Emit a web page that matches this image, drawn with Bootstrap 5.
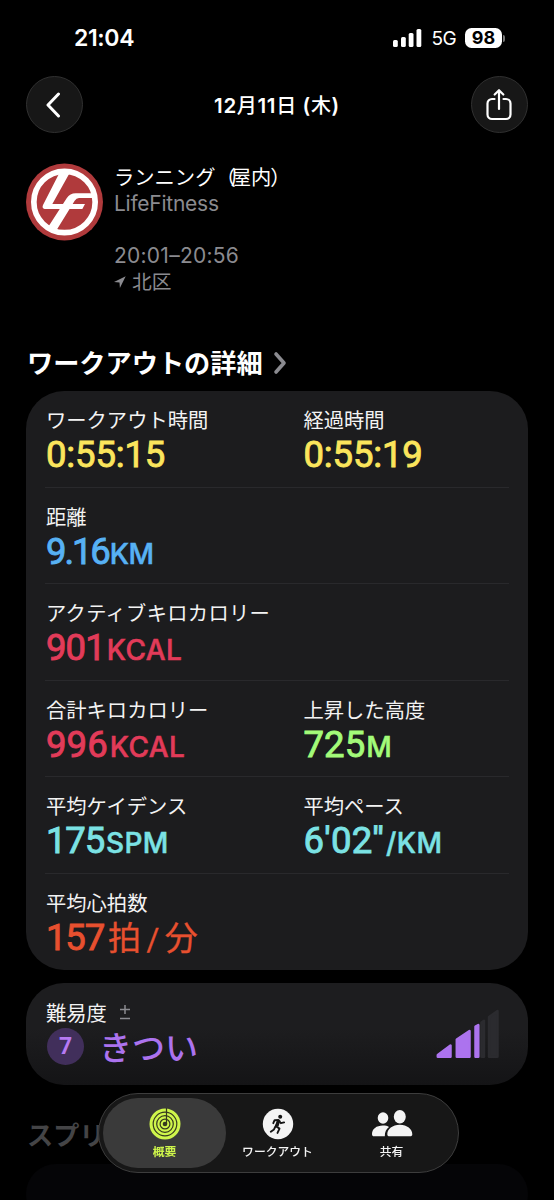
<!DOCTYPE html>
<html lang="ja">
<head>
<meta charset="utf-8">
<meta name="viewport" content="width=device-width, initial-scale=1">
<title>フィットネス</title>
<link href="https://cdn.jsdelivr.net/npm/bootstrap@5.3.0/dist/css/bootstrap.min.css" rel="stylesheet">
<style>
body{background:#000;color:#fff;font-family:Inter,"Noto Sans CJK JP",sans-serif;height:1200px;overflow:hidden;position:relative}
svg{display:block;flex:none}
.status{height:76px;padding:0 49px 0 74px}
.clock{font-size:23px;font-weight:600;line-height:28px;letter-spacing:-.35px}
.net{font-size:19px;line-height:24px;font-weight:400;letter-spacing:-.6px;margin:1px 9px 0 9px}
.batt{width:37px;height:20px;border-radius:6.5px;background:#fff;color:#000;font-size:18px;font-weight:700;line-height:20px;text-align:center}
.batt-tip{width:2px;height:7px;border-radius:0 2px 2px 0;background:#777;margin-left:1px}
.top{height:57px;padding:0 26px}
.round{width:57px;height:57px;border-radius:50%;background:#171717;border:1px solid #303030}
.title{font-size:20.5px;font-weight:600;line-height:28px;letter-spacing:.65px;white-space:pre;padding-top:2px}
.title .k{font-size:20px;font-weight:500}
.intro{padding:30px 26px 0;height:208px}
.l1{font-size:20.3px;line-height:26px;white-space:nowrap}
.l2{font-size:21px;line-height:26px;color:#8b8b90}
.about{margin-left:11px;padding-top:2px}
.fit{letter-spacing:-.25px}
.time{margin-top:26px;letter-spacing:.25px}
.place{font-size:19.8px;margin-left:6px}
.pk{margin-left:-5px;margin-right:-1px}
.head{font-size:26.2px;line-height:32px;font-weight:700;font-family:"Noto Sans CJK JP",sans-serif}
.detail{margin:5px 0 0 27px;height:45px}
.detail svg{margin:4px 0 0 9px}
.panel{background:#1c1c1e;border-radius:38px;margin:0 26px}
.metrics{height:579px;padding:0 19px}
.metric{height:96.5px;border-bottom:1px solid #29292c}
.metric:last-child{border:0}
.metric>.col-x:first-child{width:257.5px}
.lbl{font-family:"Noto Sans CJK JP",sans-serif;font-size:20.3px;line-height:24px;padding:16px 0 0 1px;color:#f3f3f3;font-weight:400;white-space:nowrap}
.wide{letter-spacing:.3px}
.val{font-family:Roboto,"Noto Sans CJK JP",sans-serif;font-size:36.5px;line-height:44px;font-weight:400;white-space:nowrap;-webkit-text-stroke:.9px currentColor;stroke-linejoin:round;padding:2px 0 0 1px;letter-spacing:.1px}
.val small{font-family:Inter,sans-serif;font-size:28px;font-weight:500;letter-spacing:.4px;margin-left:2px;-webkit-text-stroke:.5px currentColor}
.val.clk{letter-spacing:-.15px}
.val.tight{letter-spacing:-1.2px}
.val.burn{letter-spacing:-.9px}
.val.dist{letter-spacing:-2.1px}
.val.dist small,.val.alt small{margin-left:1px;letter-spacing:-.4px}
.val.pace{letter-spacing:.3px}
.val .cj{font-size:33px;font-weight:400;-webkit-text-stroke:.3px currentColor;letter-spacing:0;font-family:"Noto Sans CJK JP",sans-serif;line-height:30px;margin-left:4px}
.cj .sl{margin:0 5.5px;font-family:Roboto,sans-serif;font-size:31px}
.yel{color:#fbe55c}.blu{color:#57b1f4}.red{color:#e23b59}.grn{color:#a3fb79}.cya{color:#7be2e4}.org{color:#e8502f}
.effort{height:102px;margin-top:13px;padding:17px 28px 0 19px;background:linear-gradient(#1d1d1f 45%,#141416)}
.sign{margin-left:12px}
.seven{width:37px;height:37px;border-radius:50%;background:#412f5b;color:#b67af3;font:700 23px/37px Roboto,sans-serif;text-align:center;margin-left:2px}
.hard{font-size:33px;line-height:37px;font-weight:500;color:#ac73ee;font-family:"Noto Sans CJK JP",sans-serif;margin-left:15px}
.rate{margin-top:4px}
.bars{margin-top:9px}
.next{color:#444446;margin:33px 0 0 27px}
.low{height:60px;margin-top:14px;background:#050507}
.tabs{position:absolute;left:98px;top:1093px;width:361px;height:80px;border-radius:40px;background:rgba(24,24,24,.94);backdrop-filter:blur(3px);border:1px solid #3d3d3d;padding:4px;overflow:hidden}
.tab{height:70px;font:500 11.8px/16px "Noto Sans CJK JP",sans-serif;padding-top:10px;color:#f4f4f4;border-radius:35px;white-space:nowrap}
.tab .cap{margin-top:3px}
.tab.on{width:123px;background:rgba(62,62,62,.92);color:#cef54b;font-weight:700}.tab.mid{width:103px}.tab.end{width:125px}
</style>
</head>
<body>
<header>
  <div class="status d-flex align-items-center justify-content-between">
    <div class="clock">21:04</div>
    <div class="d-flex align-items-center">
      <svg width="29" height="18" viewBox="0 0 29 18" fill="#fff"><rect x="0" y="11" width="4.800" height="7" rx="1.500"/><rect x="8" y="8" width="4.800" height="10" rx="1.500"/><rect x="15.700" y="4" width="4.800" height="14" rx="1.500"/><rect x="23.500" y="0" width="4.800" height="18" rx="1.500"/></svg>
      <span class="net">5G</span>
      <span class="batt">98</span><span class="batt-tip"></span>
    </div>
  </div>
  <div class="top d-flex align-items-center justify-content-between">
    <div class="round d-flex align-items-center justify-content-center"><svg width="18" height="26" viewBox="0 0 18 26" fill="none" stroke="#fff" stroke-width="3" stroke-linecap="round" stroke-linejoin="round"><path d="M12.500 2 2 13l10.500 11"/></svg></div>
    <div class="title">12<span class="k">月</span>11<span class="k">日</span> (<span class="k">木</span>)</div>
    <div class="round d-flex align-items-center justify-content-center"><svg width="28" height="34" viewBox="0 0 28 34" fill="none" stroke="#fff" stroke-width="2.200" stroke-linecap="round" stroke-linejoin="round"><path d="M9.500 11H7a4.500 4.500 0 0 0-4.500 4.500v11A4.500 4.500 0 0 0 7 31h14a4.500 4.500 0 0 0 4.500-4.500v-11A4.500 4.500 0 0 0 21 11h-2.500M14 21V2.500M9.700 6.500 14 2.200l4.300 4.300"/></svg></div>
  </div>
</header>
<main>
  <section class="intro d-flex">
    <svg width="77" height="78" viewBox="33 25 231 232">
      <circle cx="148.500" cy="141" r="115.500" fill="#b03a3c"/>
      <circle cx="148.500" cy="141" r="92" fill="none" stroke="#fff" stroke-width="17"/>
      <path fill="#fff" d="M135 50h31l-54 97h98l-8 15H89q-9-2-5-12z"/>
      <path fill="#fff" d="M98 218l57-88q10-15 27-15h60v14h-50q-8 0-13 8l-56 91z"/>
    </svg>
    <div class="about">
      <div class="l1">ランニング<span>（</span><span class="pk">屋内</span><span>）</span></div>
      <div class="l2 fit">LifeFitness</div>
      <div class="l2 time">20:01–20:56</div>
      <div class="l2 d-flex align-items-center"><svg width="12" height="12" viewBox="0 0 12 12" fill="#8b8b90"><path d="M11.700.3 0 6.100l5.500.5.400 5.400z"/></svg><span class="place">北区</span></div>
    </div>
  </section>
  <h2 class="head detail d-flex mb-0"><span>ワークアウトの詳細</span><svg width="16" height="26" viewBox="0 0 16 26" fill="none" stroke="#8b8b90" stroke-width="3.600" stroke-linecap="round" stroke-linejoin="round"><path d="m4 4 8 9-8 9"/></svg></h2>
  <section class="panel metrics">
    <div class="metric d-flex"><div class="col-x"><div class="lbl">ワークアウト時間</div><div class="val clk yel">0:55:15</div></div><div class="col-x"><div class="lbl">経過時間</div><div class="val clk yel">0:55:19</div></div></div>
    <div class="metric d-flex"><div class="col-x"><div class="lbl">距離</div><div class="val dist blu">9.16<small>KM</small></div></div></div>
    <div class="metric d-flex"><div class="col-x"><div class="lbl wide">アクティブキロカロリー</div><div class="val burn red">901<small>KCAL</small></div></div></div>
    <div class="metric d-flex"><div class="col-x"><div class="lbl">合計キロカロリー</div><div class="val red">996<small>KCAL</small></div></div><div class="col-x"><div class="lbl">上昇した高度</div><div class="val alt grn">725<small>M</small></div></div></div>
    <div class="metric d-flex"><div class="col-x"><div class="lbl">平均ケイデンス</div><div class="val tight cya">175<small>SPM</small></div></div><div class="col-x"><div class="lbl">平均ペース</div><div class="val pace cya">6'02''<small>/KM</small></div></div></div>
    <div class="metric d-flex"><div class="col-x"><div class="lbl">平均心拍数</div><div class="val tight org">157<span class="cj">拍<span class="sl">/</span>分</span></div></div></div>
  </section>
  <section class="panel effort d-flex justify-content-between">
    <div>
      <div class="lbl pt-0 d-flex align-items-center"><span>難易度</span><svg class="sign" width="12" height="18" viewBox="0 0 12 18" stroke="#8b8b90" stroke-width="1.500"><path d="M6 2v9M1 6.500h10M1 15.500h10"/></svg></div>
      <div class="rate d-flex align-items-center"><span class="seven">7</span><span class="hard">きつい</span></div>
    </div>
    <svg class="bars" width="64" height="50" viewBox="0 0 64 50" stroke-width="2.500" stroke-linejoin="round">
      <g fill="#2b2b2f" stroke="#2b2b2f"><path d="M45.500 13.500 48 11.800v36h-2.500zM53 8l8.500-6v45.800H53z"/></g>
      <g fill="#ac73ee" stroke="#ac73ee"><path d="M1.800 46 14.500 36.500v11.300H1.800zM20.800 30.500l12.700-8.500v25.800H20.800zM39.500 17.500l2.800-1.500v31.800h-2.800z"/></g>
    </svg>
  </section>
  <h2 class="head next mb-0">スプリット</h2>
  <section class="panel low"></section>
</main>
<nav class="tabs d-flex">
  <div class="tab on d-flex flex-column align-items-center"><svg width="32" height="32" viewBox="0 0 32 32"><circle cx="16" cy="16" r="15.500" fill="#cef54b"/><g fill="none" stroke="#35381f" stroke-width="1.200"><circle cx="16" cy="16" r="11.800"/><circle cx="16" cy="16" r="8.300"/><circle cx="16" cy="16" r="4.900"/><path d="M17.500 0v16"/></g><circle cx="16" cy="16" r="2.300" fill="#35381f"/></svg><span class="cap">概要</span></div>
  <div class="tab mid d-flex flex-column align-items-center"><svg width="32" height="32" viewBox="0 0 32 32"><circle cx="16" cy="16" r="15.200" fill="#f4f4f4"/><circle cx="18.200" cy="8.700" r="2" fill="#151515"/><path d="M11.300 15.200l1.300-3 4-.2 2.300 3.200 3.200-.8M16.200 12.500l-2.400 5.500 3.700 2.600-2 4.300M13.400 18.500 12 21.400l-3.200 2.300" fill="none" stroke="#151515" stroke-width="1.900" stroke-linecap="round" stroke-linejoin="round"/><path d="M15.300 12l3 .6-1.800 6-3-1z" fill="#151515"/></svg><span class="cap">ワークアウト</span></div>
  <div class="tab end d-flex flex-column align-items-center"><svg width="42" height="32" viewBox="0 0 42 32" fill="#f4f4f4"><ellipse cx="12" cy="10" rx="5.300" ry="5.800"/><ellipse cx="28.800" cy="8.700" rx="6" ry="6.700"/><path d="M1 26c0-5 4.500-8.500 10.800-8.500 2.700 0 4.700.5 6.200 1.400-2.800 2.200-4.200 4.900-4.200 9.400H3c-1.300 0-2-.7-2-2.300zM16.300 26.200c0-5.200 5.200-9.500 12.500-9.500s12.500 4.300 12.500 9.500c0 1.500-.8 2.100-2.200 2.100H18.500c-1.400 0-2.200-.6-2.200-2.100z"/></svg><span class="cap">共有</span></div>
</nav>
<script src="https://cdn.jsdelivr.net/npm/bootstrap@5.3.0/dist/js/bootstrap.bundle.min.js"></script>
</body>
</html>
